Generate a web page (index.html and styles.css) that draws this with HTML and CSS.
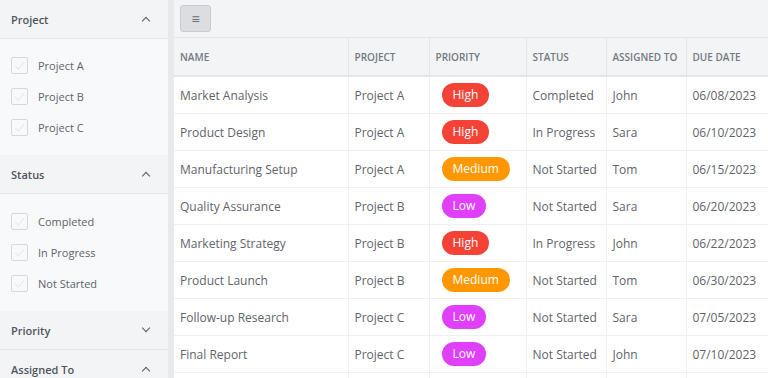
FILE: index.html
```html
<!DOCTYPE html>
<html lang="en">
<head>
  <meta charset="UTF-8" />
  <meta name="viewport" content="width=device-width, initial-scale=1.0"/>
  <title>Tasks</title>
  <link rel="stylesheet" href="styles.css">
</head>
<body>
  <aside class="sidebar">
    <div class="filter">
      <div class="filter-head">Project <span class="chev up"></span></div>
      <ul class="filter-body">
        <li><span class="box"></span>Project A</li>
        <li><span class="box"></span>Project B</li>
        <li><span class="box"></span>Project C</li>
      </ul>
    </div>
    <div class="filter">
      <div class="filter-head">Status <span class="chev up"></span></div>
      <ul class="filter-body">
        <li><span class="box"></span>Completed</li>
        <li><span class="box"></span>In Progress</li>
        <li><span class="box"></span>Not Started</li>
      </ul>
    </div>
    <div class="filter">
      <div class="filter-head">Priority <span class="chev down"></span></div>
    </div>
    <div class="filter">
      <div class="filter-head">Assigned To <span class="chev up"></span></div>
    </div>
  </aside>

  <main class="content">
    <div class="toolbar">
      <button class="menu-btn">&#8801;</button>
    </div>
    <table class="grid">
      <colgroup>
        <col style="width:174px"><col style="width:81px"><col style="width:97px">
        <col style="width:80px"><col style="width:80px"><col style="width:90px">
      </colgroup>
      <thead>
        <tr><th>Name</th><th>Project</th><th>Priority</th><th>Status</th><th>Assigned To</th><th>Due Date</th></tr>
      </thead>
      <tbody>
        <tr><td>Market Analysis</td><td>Project A</td><td><span class="pill high">High</span></td><td>Completed</td><td>John</td><td>06/08/2023</td></tr>
        <tr><td>Product Design</td><td>Project A</td><td><span class="pill high">High</span></td><td>In Progress</td><td>Sara</td><td>06/10/2023</td></tr>
        <tr><td>Manufacturing Setup</td><td>Project A</td><td><span class="pill medium">Medium</span></td><td>Not Started</td><td>Tom</td><td>06/15/2023</td></tr>
        <tr><td>Quality Assurance</td><td>Project B</td><td><span class="pill low">Low</span></td><td>Not Started</td><td>Sara</td><td>06/20/2023</td></tr>
        <tr><td>Marketing Strategy</td><td>Project B</td><td><span class="pill high">High</span></td><td>In Progress</td><td>John</td><td>06/22/2023</td></tr>
        <tr><td>Product Launch</td><td>Project B</td><td><span class="pill medium">Medium</span></td><td>Not Started</td><td>Tom</td><td>06/30/2023</td></tr>
        <tr><td>Follow-up Research</td><td>Project C</td><td><span class="pill low">Low</span></td><td>Not Started</td><td>Sara</td><td>07/05/2023</td></tr>
        <tr><td>Final Report</td><td>Project C</td><td><span class="pill low">Low</span></td><td>Not Started</td><td>John</td><td>07/10/2023</td></tr>
        <tr><td>&nbsp;</td><td></td><td></td><td></td><td></td><td></td></tr>
      </tbody>
    </table>
  </main>
</body>
</html>
```

FILE: styles.css
```css
html, body {
  margin: 0;
  height: 100%;
  overflow: hidden;
}
body {
  display: flex;
  font-family: 'Open Sans', sans-serif;
  color: #5f646b;
  background: #fff;
}
.sidebar {
  width: 168px;
  flex: none;
  background: #f8f9fb;
  border-right: 6px solid #e8e9eb;
}
.filter-head {
  height: 39px;
  box-sizing: border-box;
  padding: 0 12px 0 11px;
  display: flex;
  align-items: center;
  justify-content: space-between;
  background: #f3f4f6;
  border-bottom: 1px solid #e4e6e9;
  font-size: 11px;
  font-weight: 600;
  color: #50555d;
}
.chev {
  width: 5px;
  height: 5px;
  border-left: 1.5px solid #555a62;
  border-top: 1.5px solid #555a62;
  margin-right: 7px;
}
.chev.up { transform: rotate(45deg); margin-top: 4px; }
.chev.down { transform: rotate(225deg); margin-top: -4px; }
.filter-body {
  list-style: none;
  margin: 0;
  padding: 11px 0 12px 11px;
}
.filter + .filter .filter-body {
  padding-top: 12px;
}
.filter-body li {
  height: 31px;
  display: flex;
  align-items: center;
  font-size: 11px;
  color: #5f646b;
}
.box {
  width: 17px;
  height: 17px;
  box-sizing: border-box;
  border: 1px solid #d5d8dc;
  border-radius: 2px;
  background: #f8f9fb;
  margin-right: 10px;
  position: relative;
}
.box::after {
  content: "";
  position: absolute;
  left: 5px;
  top: 2px;
  width: 4px;
  height: 8px;
  border-right: 1px solid #e6e8eb;
  border-bottom: 1px solid #e6e8eb;
  transform: rotate(40deg);
}
.content {
  flex: 1;
  min-width: 0;
  overflow: hidden;
  background: #fff;
}
.toolbar {
  height: 38px;
  box-sizing: border-box;
  background: #f3f4f6;
  padding: 5px 6px;
  border-bottom: 1px solid #e4e6e9;
}
.menu-btn {
  width: 31px;
  height: 27px;
  background: #dcdde0;
  border: 1px solid #c9cbce;
  border-radius: 3px;
  color: #6a6e74;
  font-size: 14px;
  line-height: 1;
  padding: 0;
}
.grid {
  table-layout: fixed;
  width: 602px;
  border-collapse: collapse;
}
.grid th {
  height: 37px;
  background: #f3f4f6;
  text-align: left;
  text-transform: uppercase;
  font-size: 10px;
  font-weight: 600;
  color: #747983;
  padding: 0 6px;
  border-right: 1px solid #e4e6e9;
  border-bottom: 2px solid #e4e6e9;
  white-space: nowrap;
}
.grid td {
  height: 36px;
  padding: 0 6px;
  font-size: 12px;
  color: #5f646b;
  border-right: 1px solid #eef0f2;
  border-bottom: 1px solid #eef0f2;
  white-space: nowrap;
}
.pill {
  display: inline-block;
  height: 24px;
  line-height: 24px;
  padding: 0 11px;
  margin-left: 6px;
  border-radius: 12px;
  color: #fff;
  font-size: 12px;
}
.pill.high { background: #f44336; }
.pill.medium { background: #ff9800; }
.pill.low { background: #e040fb; }
```
